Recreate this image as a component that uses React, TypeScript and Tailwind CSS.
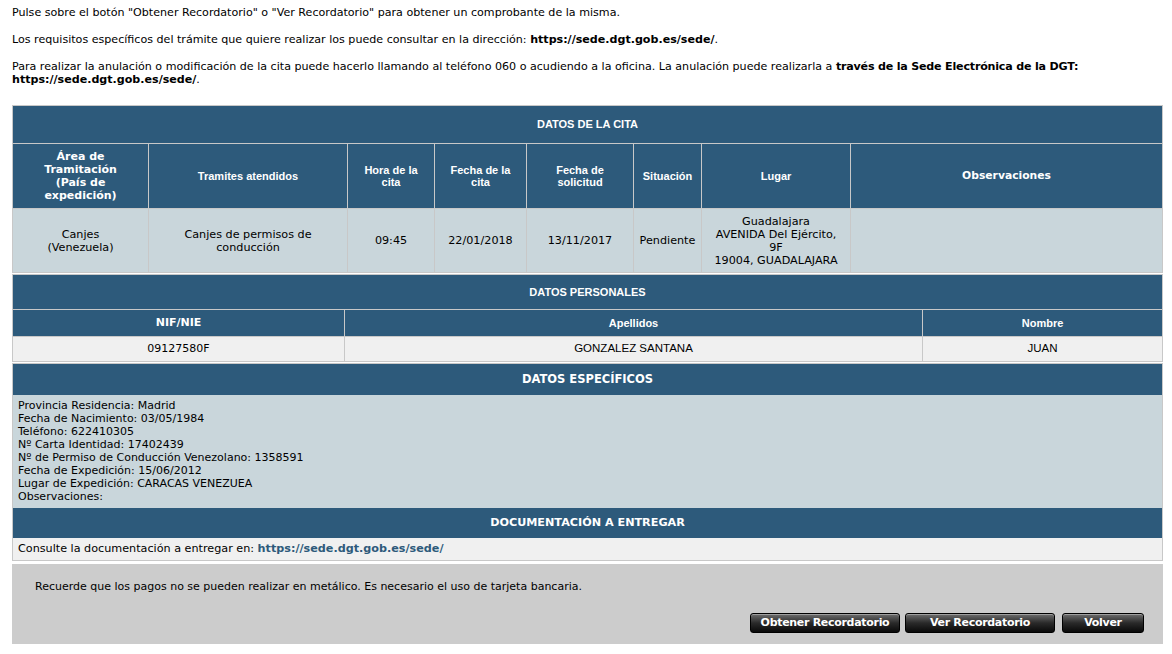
import React from "react";

const verdana = "font-['DejaVu_Sans',Verdana,sans-serif]";
const arial = "font-['Liberation_Sans',Arial,sans-serif]";

const cell = "border border-[#c8c8c8] align-middle text-center";

export default function App() {
  return (
    <div className={`min-h-screen w-full bg-white text-black ${verdana}`}>
      {/* Intro text */}
      <div className="pl-3 pt-[6px] text-[11.1px] leading-[13px]">
        <p className="mb-[14px]">
          Pulse sobre el botón "Obtener Recordatorio" o "Ver Recordatorio" para obtener un comprobante de la misma.
        </p>
        <p className="mb-[14px]">
          Los requisitos específicos del trámite que quiere realizar los puede consultar en la dirección:{" "}
          <b>https://sede.dgt.gob.es/sede/</b>.
        </p>
        <p>
          Para realizar la anulación o modificación de la cita puede hacerlo llamando al teléfono 060 o acudiendo a la
          oficina. La anulación puede realizarla a{" "}
          <b className="tracking-[-0.2px]">través de la Sede Electrónica de la DGT:</b>
          <br />
          <b>https://sede.dgt.gob.es/sede/</b>.
        </p>
      </div>

      <div className="ml-3 mt-[19px] w-[1151px]">
        {/* Datos de la cita */}
        <table className="w-full border-collapse border border-[#c8c8c8] table-fixed">
          <colgroup>
            <col className="w-[136px]" />
            <col className="w-[199px]" />
            <col className="w-[87px]" />
            <col className="w-[92px]" />
            <col className="w-[107px]" />
            <col className="w-[68px]" />
            <col className="w-[149px]" />
            <col />
          </colgroup>
          <thead>
            <tr className="bg-[#2d5a7b] text-white">
              <th colSpan={8} className={`${cell} h-[38px] ${arial} text-[11px] font-bold`}>
                DATOS DE LA CITA
              </th>
            </tr>
            <tr className="bg-[#2d5a7b] text-white h-[65px] text-[11px] font-bold leading-[12px]">
              <th className={`${cell} ${verdana} text-[11px] leading-[13px]`}>
                Área de
                <br />
                Tramitación
                <br />
                (País de
                <br />
                expedición)
              </th>
              <th className={`${cell} ${arial}`}>Tramites atendidos</th>
              <th className={`${cell} ${arial}`}>
                Hora de la
                <br />
                cita
              </th>
              <th className={`${cell} ${arial}`}>
                Fecha de la
                <br />
                cita
              </th>
              <th className={`${cell} ${arial}`}>
                Fecha de
                <br />
                solicitud
              </th>
              <th className={`${cell} ${arial}`}>Situación</th>
              <th className={`${cell} ${arial}`}>Lugar</th>
              <th className={`${cell} ${verdana} text-[10.75px]`}>Observaciones</th>
            </tr>
          </thead>
          <tbody>
            <tr className="bg-[#c9d6db] h-[64px] text-[11.2px] leading-[13px]">
              <td className={cell}>
                Canjes
                <br />
                (Venezuela)
              </td>
              <td className={cell}>
                Canjes de permisos de
                <br />
                conducción
              </td>
              <td className={cell}>09:45</td>
              <td className={cell}>22/01/2018</td>
              <td className={cell}>13/11/2017</td>
              <td className={cell}>Pendiente</td>
              <td className={cell}>
                Guadalajara
                <br />
                AVENIDA Del Ejército,
                <br />
                9F
                <br />
                19004, GUADALAJARA
              </td>
              <td className={cell}></td>
            </tr>
          </tbody>
        </table>

        {/* Datos personales */}
        <table className="w-full border-collapse border border-[#c8c8c8] table-fixed mt-px">
          <colgroup>
            <col className="w-[332px]" />
            <col className="w-[578px]" />
            <col />
          </colgroup>
          <tbody>
            <tr className="bg-[#2d5a7b] text-white">
              <th colSpan={3} className={`${cell} h-[35px] ${arial} text-[11px] font-bold`}>
                DATOS PERSONALES
              </th>
            </tr>
            <tr className="bg-[#2d5a7b] text-white h-[27px] font-bold text-[11px]">
              <th className={`${cell} ${verdana} text-[11px]`}>NIF/NIE</th>
              <th className={`${cell} ${arial}`}>Apellidos</th>
              <th className={`${cell} ${arial}`}>Nombre</th>
            </tr>
            <tr className="bg-[#f0f0f0] h-[25px]">
              <td className={`${cell} text-[11px]`}>09127580F</td>
              <td className={`${cell} ${arial} text-[11.5px]`}>GONZALEZ SANTANA</td>
              <td className={`${cell} ${arial} text-[11.5px]`}>JUAN</td>
            </tr>
          </tbody>
        </table>

        {/* Datos especificos */}
        <div className="mt-px border border-[#c8c8c8]">
          <div className="bg-[#2d5a7b] text-white h-[31px] flex items-center justify-center text-[11.5px] font-bold">
            DATOS ESPECÍFICOS
          </div>
          <div className="bg-[#c9d6db] h-[113px] pl-[5px] pt-[4px] text-[11px] leading-[13px]">
            <div>Provincia Residencia: Madrid</div>
            <div>Fecha de Nacimiento: 03/05/1984</div>
            <div>Teléfono: 622410305</div>
            <div>Nº Carta Identidad: 17402439</div>
            <div>Nº de Permiso de Conducción Venezolano: 1358591</div>
            <div>Fecha de Expedición: 15/06/2012</div>
            <div>Lugar de Expedición: CARACAS VENEZUEA</div>
            <div>Observaciones:</div>
          </div>
          <div className="bg-[#2d5a7b] text-white h-[30px] flex items-center justify-center text-[11.2px] font-bold">
            DOCUMENTACIÓN A ENTREGAR
          </div>
          <div className="bg-[#f0f0f0] h-[22px] pl-[5px] flex items-center text-[11.2px]">
            Consulte la documentación a entregar en:&nbsp;
            <b className="text-[#2d5a7b]">https://sede.dgt.gob.es/sede/</b>
          </div>
        </div>

        {/* Aviso y botones */}
        <div className="mt-[3px] bg-[#cccccc] h-[80px] pl-[23px] pr-[16px] pt-[16px]">
          <p className="text-[11px] leading-[13px]">
            Recuerde que los pagos no se pueden realizar en metálico. Es necesario el uso de tarjeta bancaria.
          </p>
          <div className="mt-[20px] flex justify-end gap-[5px] pr-[3px]">
            {["Obtener Recordatorio", "Ver Recordatorio", "Volver"].map((label, i) => (
              <button
                key={label}
                type="button"
                className={`h-[20px] ${i === 2 ? "w-[82px] ml-[2px]" : "w-[150px]"} rounded-[3px] border border-black bg-gradient-to-b from-[#707070] via-[#2a2a2a] to-[#0a0a0a] text-white text-[11px] font-bold tracking-[-0.3px] shadow-[inset_0_1px_0_rgba(255,255,255,0.35)]`}
              >
                {label}
              </button>
            ))}
          </div>
        </div>
      </div>
    </div>
  );
}
